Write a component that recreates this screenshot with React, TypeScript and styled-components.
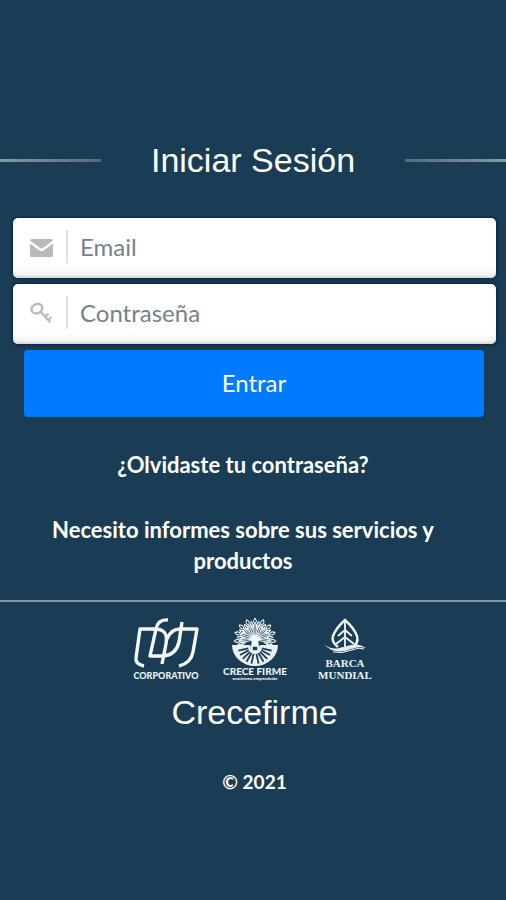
import React from "react";
import styled, { createGlobalStyle } from "styled-components";

const GlobalStyle = createGlobalStyle`
  *, *::before, *::after { box-sizing: border-box; }
  body {
    margin: 0;
    background: #1a3d55;
    color: #fff;
    font-family: Lato, "Open Sans", sans-serif;
  }
`;

const Page = styled.main`
  min-height: 100vh;
  padding-top: 136px;
`;

const TitleRow = styled.header`
  display: flex;
  align-items: center;
  justify-content: space-between;
  margin-bottom: 34px;
`;

const TitleRule = styled.span<{ $side: "left" | "right" }>`
  width: 20%;
  height: 3px;
  background: linear-gradient(to ${(p) => p.$side}, #566b7a, #8799a5);
`;

const Heading = styled.h1`
  margin: 0;
  font: 400 34px/48px "Liberation Sans", Arial, sans-serif;
  text-align: center;
`;

const BrandName = styled(Heading).attrs({ as: "h2" })``;

const Form = styled.form`
  display: flex;
  flex-direction: column;
  gap: 6px;
  padding: 0 10px 0 13px;
`;

const Field = styled.label`
  display: flex;
  align-items: center;
  height: 60px;
  padding: 0 16px;
  border-radius: 5px;
  background: linear-gradient(#fff 82%, #ededed);
  box-shadow: 0 0 3px 1px #092344, inset 0 -2px 1px #d8dadc;
  color: #b9babb;
`;

const FieldIcon = styled.svg`
  flex: none;
  width: 25px;
  height: 24px;
`;

const Divider = styled.span`
  flex: none;
  width: 2px;
  height: 33px;
  margin: 0 12px 4px 12px;
  background: #dfe1e3;
`;

const Input = styled.input`
  flex: 1;
  min-width: 0;
  padding: 0 0 2px;
  border: 0;
  outline: 0;
  background: transparent;
  color: #34444f;
  font: 400 24px/32px Lato, "Open Sans", sans-serif;

  &::placeholder {
    color: #74838d;
    opacity: 1;
  }
`;

const Submit = styled.button`
  height: 67px;
  margin: 0 12px 0 11px;
  padding: 0 0 2px;
  border: 0;
  border-radius: 4px;
  background: #007bff;
  color: #fff;
  font: 400 24px/32px Lato, "Open Sans", sans-serif;
  cursor: pointer;
`;

const Links = styled.nav`
  display: flex;
  flex-direction: column;
  align-items: center;
  gap: 34px;
  padding: 32px 45px 24px 25px;
  text-align: center;
`;

const TextLink = styled.a`
  max-width: 416px;
  color: #fff;
  font-size: 22px;
  font-weight: 700;
  line-height: 31px;
  text-decoration: none;
`;

const Footer = styled.footer`
  border-top: 2px solid #8495a1;
  padding: 14px 0 0 3px;
  text-align: center;
`;

const Logos = styled.div`
  display: flex;
  justify-content: center;
  gap: 18px;
  margin-bottom: 2px;
`;

const Logo = styled.svg`
  width: 72px;
  height: 70px;
  fill: none;
  stroke: #f3f7f9;
`;

const LogoText = styled.text<{ $size: number; $serif?: boolean }>`
  fill: #edf3f6;
  stroke: none;
  text-anchor: middle;
  font-family: ${(p) => (p.$serif ? '"Liberation Serif", serif' : "Lato, sans-serif")};
  font-weight: ${(p) => (p.$serif ? 700 : 900)};
  font-size: ${(p) => p.$size}px;
`;

const Copyright = styled.p`
  margin: 31px 0 0;
  font-size: 19px;
  font-weight: 700;
  line-height: 30px;
`;

const EnvelopeIcon = () => (
  <FieldIcon viewBox="0 0 25 24" fill="currentColor" aria-hidden="true">
    <path d="M1 4.5Q1 3 2.5 3h20Q24 3 24 4.500L14.200 11.800Q12.500 13 10.800 11.800Z" />
    <path d="M1 7.500L10 14.200Q12.500 15.900 15 14.200L24 7.500V19.500Q24 21 22.500 21h-20Q1 21 1 19.500Z" />
  </FieldIcon>
);

const KeyIcon = () => (
  <FieldIcon viewBox="0 0 25 24" fill="none" stroke="currentColor" strokeWidth="2.300" aria-hidden="true">
    <path d="M4 4Q8 0 12 3Q15 6 11.500 10Q7 13 3.500 10Q1 7 4 4Z" />
    <path d="M11.500 9.500L21.500 20.500M16 14.500L19.500 12M19 18L22.500 15" />
  </FieldIcon>
);

const CorporativoLogo = () => (
  <Logo viewBox="0 0 72 70" role="img" aria-label="Corporativo">
    <g strokeWidth="3.400" strokeLinejoin="round">
      <path d="M15 50Q6 48 7 42L11 13H25" />
      <path d="M39 4Q29 3 27 13L21 40H34" />
      <path d="M24 13Q40 12 37 28L33 48" />
      <path d="M34 40Q47 39 50 26L53 6" />
      <path d="M38 23Q42 13 51 13H68L64 36Q62 47 50 50" />
    </g>
    <LogoText x="37" y="63" $size={9}>CORPORATIVO</LogoText>
  </Logo>
);

const fan = Array.from({ length: 19 }, (_, i) => -108 + i * 12);
const rays = [-78, -62, -46, -30, -12, 12, 30, 46, 62, 78];

const CreceFirmeLogo = () => (
  <Logo viewBox="0 0 72 70" role="img" aria-label="Crece Firme">
    {fan.map((angle, i) => (
      <path
        key={angle}
        strokeWidth="1"
        transform={`rotate(${angle} 36 23)`}
        d={
          i % 2
            ? "M36 23V8M36 8Q33 5 36 2Q39 5 36 8"
            : "M36 23V12M36 14L34 8M36 14L38 8M36 11Q34 8 36 5Q38 8 36 11"
        }
      />
    ))}
    <circle cx="36" cy="23" r="4" fill="#f3f7f9" stroke="none" />
    <path d="M33 23H39L40 31H32Z" fill="#f3f7f9" stroke="none" />
    <path d="M13 29H31L33 33H39L41 29H59A23 21 0 0 1 13 29Z" fill="#e9f0f3" stroke="none" />
    <g stroke="#1a3d55" strokeWidth="1.800">
      {rays.map((angle) => (
        <path key={angle} d="M36 38V48" transform={`rotate(${angle} 36 31)`} />
      ))}
    </g>
    <rect x="33" y="30" width="6" height="5" rx="1" fill="#1a3d55" strokeWidth="1.500" />
    <LogoText x="36" y="59" $size={10}>CRECE FIRME</LogoText>
    <LogoText x="36" y="64" $size={4}>ecosistema emprendedor</LogoText>
  </Logo>
);

const BarcaMundialLogo = () => (
  <Logo viewBox="0 0 72 70" role="img" aria-label="Barca Mundial">
    <path strokeWidth="2.400" d="M29 31Q22 26 24 20Q27 12 36 4Q45 12 48 20Q50 27 43 32" />
    <path strokeWidth="1.800" d="M36 4V32M36 14L29 20M36 14L43 20M36 21L27 28M36 21L45 28" />
    <path fill="#e6eef2" stroke="none" d="M15 28Q22 34 30 32L42 29Q50 27 57 32Q49 30 42 33Q25 40 15 28Z" />
    <path strokeWidth="1" d="M24 36Q33 38 43 34Q50 31 55 33" />
    <LogoText x="36" y="51" $size={11} $serif>BARCA</LogoText>
    <LogoText x="36" y="63" $size={11} $serif>MUNDIAL</LogoText>
  </Logo>
);

export default function App() {
  return (
    <>
      <GlobalStyle />
      <Page>
        <TitleRow>
          <TitleRule $side="left" />
          <Heading>Iniciar Sesión</Heading>
          <TitleRule $side="right" />
        </TitleRow>
        <Form onSubmit={(event) => event.preventDefault()}>
          <Field>
            <EnvelopeIcon />
            <Divider />
            <Input type="email" placeholder="Email" aria-label="Email" />
          </Field>
          <Field>
            <KeyIcon />
            <Divider />
            <Input type="password" placeholder="Contraseña" aria-label="Contraseña" />
          </Field>
          <Submit type="submit">Entrar</Submit>
        </Form>
        <Links>
          <TextLink href="#recuperar">¿Olvidaste tu contraseña?</TextLink>
          <TextLink href="#informes">Necesito informes sobre sus servicios y productos</TextLink>
        </Links>
        <Footer>
          <Logos>
            <CorporativoLogo />
            <CreceFirmeLogo />
            <BarcaMundialLogo />
          </Logos>
          <BrandName>Crecefirme</BrandName>
          <Copyright>© 2021</Copyright>
        </Footer>
      </Page>
    </>
  );
}
